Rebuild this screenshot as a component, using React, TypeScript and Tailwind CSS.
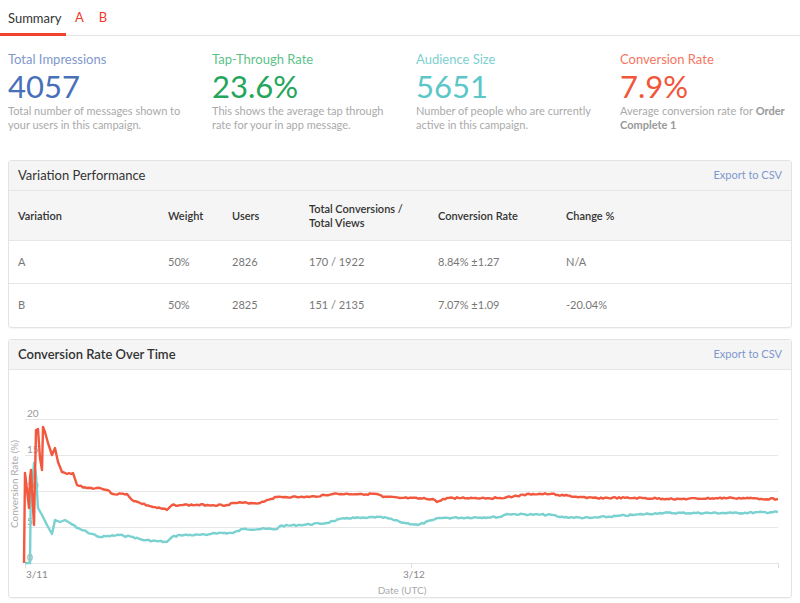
import React from "react";

const font = { fontFamily: "Lato, 'Open Sans', sans-serif" };

const stats = [
    { label: "Total Impressions", value: "4057", labelCls: "text-[#7f98cc]", valueCls: "text-[#4770b9]", desc: <>Total number of messages shown to your users in this campaign.</> },
    { label: "Tap-Through Rate", value: "23.6%", labelCls: "text-[#5cc28a]", valueCls: "text-[#23a65b]", desc: <>This shows the average tap through rate for your in app message.</> },
    { label: "Audience Size", value: "5651", labelCls: "text-[#7dd1d1]", valueCls: "text-[#5cc7c9]", desc: <>Number of people who are currently active in this campaign.</> },
    { label: "Conversion Rate", value: "7.9%", labelCls: "text-[#f4765f]", valueCls: "text-[#f1553a]", desc: <>Average conversion rate for <b className="font-bold text-[#999]">Order Complete 1</b></> },
];

const rows = [
    ["A", "50%", "2826", "170 / 1922", "8.84% ±1.27", "N/A"],
    ["B", "50%", "2825", "151 / 2135", "7.07% ±1.09", "-20.04%"],
];

const cols = ["w-[150px]", "w-[64px]", "w-[77px]", "w-[129px]", "w-[128px]", "flex-1"];

const redKeys: number[][] = [[24,563],[25,473],[27,490],[29,508],[30,478],[31,470],[33,508],[34,525],[36,430],[38,429],[40,458],[42,470],[43,427],[45,432],[48,443],[52,455],[55,448],[58,462],[62,472],[67,474],[73,473],[77,485],[87,488],[100,488],[107,490],[113,494],[127,494],[132,500],[140,503],[153,507],[167,510],[172,505],[183,505],[207,505],[227,505],[233,503],[260,503],[267,500],[277,497],[300,497],[310,497],[333,494],[360,494],[377,494],[383,497],[400,498],[433,499],[437,502],[447,498],[500,498],[507,497],[533,494],[550,494],[587,498],[633,498],[680,499],[733,498],[778,499]];
const tealKeys: number[][] = [[25,563],[30,563],[31,473],[32,487],[34,463],[36,475],[38,508],[42,515],[47,525],[52,534],[55,520],[60,522],[65,520],[70,523],[77,528],[87,532],[100,537],[120,535],[133,537],[143,540],[167,542],[172,537],[180,535],[207,535],[213,533],[233,533],[243,529],[277,529],[280,526],[300,525],[327,523],[333,521],[347,518],[367,518],[373,517],[387,518],[400,522],[418,525],[433,520],[440,518],[500,517],[507,514],[553,515],[560,517],[590,518],[633,515],[660,513],[733,513],[778,512]];

// seeded jitter so the lines look like noisy sampled data
function buildLine(keys: number[][], seed: number) {
    let s = seed;
    const rand = () => {
        s = (s * 9301 + 49297) % 233280;
        return s / 233280;
    };
    const pts: string[] = [];
    for (let i = 0; i < keys.length - 1; i++) {
        const [x0, y0] = keys[i];
        const [x1, y1] = keys[i + 1];
        pts.push(`${x0},${y0}`);
        if (x0 > 60 && x1 - x0 > 3) {
            for (let x = x0 + 2; x < x1 - 1; x += 2) {
                const t = (x - x0) / (x1 - x0);
                const y = y0 + (y1 - y0) * t + (rand() - 0.5) * 1.6;
                pts.push(`${x},${y.toFixed(1)}`);
            }
        }
    }
    const last = keys[keys.length - 1];
    pts.push(`${last[0]},${last[1]}`);
    return pts.join(" ");
}

const Card = ({ title, bold, children }: { title: string; bold?: boolean; children: React.ReactNode }) => (
    <div className="mx-2 border border-[#e3e3e3] rounded-[3px] shadow-[0_1px_1px_rgba(0,0,0,0.04)] overflow-hidden">
        <div className="h-[30px] bg-[#f5f5f5] border-b border-[#e6e6e6] flex items-center justify-between px-[9px]">
            <span className={`text-[13px] text-[#333] ${bold ? "font-semibold" : ""}`}>{title}</span>
            <span className="text-[11px] text-[#7f98cc]">Export to CSV</span>
        </div>
        {children}
    </div>
);

const Chart = () => {
    const grid = [419, 455, 491, 527, 563];
    const labels = ["20", "15", "10", "5", "0"];
    return (
        <svg width={784} height={227} viewBox="9 370 784 227" className="block">
            {grid.map((y, i) => (
                <g key={y}>
                    <line x1={25} x2={778} y1={y + 0.5} y2={y + 0.5} stroke="#e6e6e6" strokeWidth={1} />
                    <text x={27} y={y - 2} fontSize={10} fill="#999" fontFamily="Lato, sans-serif">{labels[i]}</text>
                </g>
            ))}
            {[25, 411, 778].map(x => (
                <line key={x} x1={x + 0.5} x2={x + 0.5} y1={563} y2={568} stroke="#ddd" strokeWidth={1} />
            ))}
            <text x={26} y={578} fontSize={10} fill="#888" fontFamily="Lato, sans-serif">3/11</text>
            <text x={403} y={578} fontSize={10} fill="#888" fontFamily="Lato, sans-serif">3/12</text>
            <text x={402} y={594} fontSize={10} fill="#aaa" fontFamily="Lato, sans-serif" textAnchor="middle">Date (UTC)</text>
            <text x={0} y={0} fontSize={10} fill="#aaa" fontFamily="Lato, sans-serif" textAnchor="middle" transform="translate(18 484) rotate(-90)">Conversion Rate (%)</text>
            <polyline points={buildLine(tealKeys, 7)} fill="none" stroke="#79d1d0" strokeWidth={2.4} strokeLinejoin="round" />
            <polyline points={buildLine(redKeys, 3)} fill="none" stroke="#f2583d" strokeWidth={2.4} strokeLinejoin="round" />
        </svg>
    );
};

export default function App() {
    return (
        <div className="w-[800px] h-[603px] bg-white overflow-hidden" style={font}>
            <div className="h-9 border-b border-[#e4e4e4] flex items-end">
                <div className="w-[66px] h-[35px] -mb-px border-b-[3px] border-[#f0432f] pl-2 pt-[8px] text-[13px] text-[#333]">Summary</div>
                <span className="ml-[9px] mb-[8px] text-[13px] text-[#ee3a2a]">A</span>
                <span className="ml-[15px] mb-[8px] text-[13px] text-[#ee3a2a]">B</span>
            </div>

            <div className="flex px-2 pt-[14px] h-[124px]">
                {stats.map(s => (
                    <div key={s.label} className="w-[204px] shrink-0">
                        <div className={`text-[13px] leading-[18px] ${s.labelCls}`}>{s.label}</div>
                        <div className={`text-[31px] leading-[36px] ${s.valueCls}`}>{s.value}</div>
                        <div className="w-[176px] text-[11px] leading-[14px] text-[#aaa]">{s.desc}</div>
                    </div>
                ))}
            </div>

            <Card title="Variation Performance">
                <div className="h-[50px] bg-[#f5f5f5] border-b border-[#e6e6e6] flex items-center px-[9px] text-[11px] font-semibold text-[#333] leading-[14px]">
                    {["Variation", "Weight", "Users", "Total Conversions / Total Views", "Conversion Rate", "Change %"].map((h, i) => (
                        <div key={h} className={`${cols[i]} ${i === 3 ? "pr-[14px]" : ""}`}>{h}</div>
                    ))}
                </div>
                {rows.map((r, ri) => (
                    <div key={r[0]} className={`h-[43px] flex items-center px-[9px] text-[11px] text-[#777] ${ri === 0 ? "border-b border-[#e6e6e6]" : ""}`}>
                        {r.map((c, i) => (
                            <div key={i} className={cols[i]}>{c}</div>
                        ))}
                    </div>
                ))}
            </Card>

            <div className="h-[11px]" />

            <Card title="Conversion Rate Over Time" bold>
                <Chart />
            </Card>
        </div>
    );
}
